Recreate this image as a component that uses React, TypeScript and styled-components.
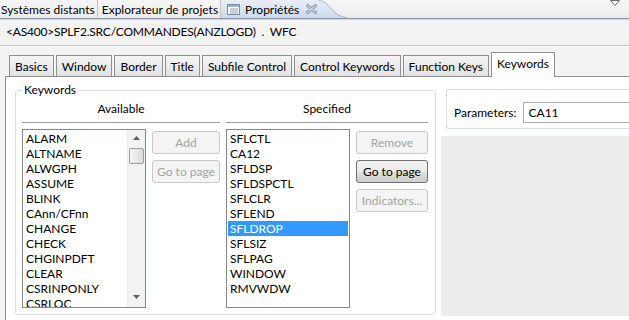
import React from "react";
import styled, { createGlobalStyle } from "styled-components";

const FONT = `Lato, "Noto Sans", "Liberation Sans", sans-serif`;

const GlobalStyle = createGlobalStyle`
  html, body { margin: 0; padding: 0; }
  body {
    font-family: ${FONT};
    font-size: 12px;
    color: #000;
    background: #f3f3f3;
  }
`;

const Screen = styled.div`
  width: 629px;
  height: 320px;
  overflow: hidden;
  display: flex;
  flex-direction: column;
  background: #f3f3f3;
`;

/* ---- view tabs (Eclipse part stack) ---- */

const ViewBar = styled.div`
  flex-shrink: 0;
  height: 18px;
  display: flex;
  align-items: stretch;
  background: linear-gradient(#f6f6f6, #ececec);
  border-bottom: 1px solid #8d97a5;
  box-shadow: 0 1px 0 #c6d5ea;
  margin-bottom: 1px;
`;

const ViewTab = styled.div`
  display: flex;
  align-items: center;
  padding: 0 2px 0 4px;
  border-right: 1px solid #c4c4c4;
  white-space: nowrap;

  &:first-child {
    padding-left: 1px;
  }
`;

const ActiveViewTab = styled.div`
  display: flex;
  align-items: center;
  padding: 0 2px 0 6px;
  background: linear-gradient(#e9eff8, #ccdaed);
  white-space: nowrap;
`;

const TabLabel = styled.span`
  margin: 0 7px 0 5px;
`;

const TabCurve = styled.svg`
  display: block;
  flex-shrink: 0;
`;

const ViewMenu = styled.svg`
  margin: 0 9px 0 auto;
  align-self: flex-start;
`;

/* ---- title ---- */

const TitleBar = styled.div`
  flex-shrink: 0;
  height: 26px;
  box-sizing: border-box;
  padding: 4px 0 0 6px;
  line-height: 16px;
  letter-spacing: -0.2px;
  white-space: pre;
  border-bottom: 1px solid #c0c0c0;
  box-shadow: 0 1px 0 #ffffff;
`;

/* ---- tab folder ---- */

const Folder = styled.div`
  flex: 1;
  display: flex;
  flex-direction: column;
  margin-top: 6px;
`;

const TabRow = styled.div`
  height: 24px;
  display: flex;
  align-items: flex-end;
  gap: 2px;
  padding-left: 9px;
`;

const Tab = styled.div<{ $selected?: boolean }>`
  position: relative;
  z-index: ${(p) => (p.$selected ? 1 : 0)};
  height: ${(p) => (p.$selected ? 25 : 21)}px;
  margin-bottom: ${(p) => (p.$selected ? -1 : 0)}px;
  box-sizing: border-box;
  display: flex;
  align-items: center;
  padding: 0 5px ${(p) => (p.$selected ? 3 : 0)}px;
  border: 1px solid #8e8f8f;
  border-bottom: none;
  background: ${(p) =>
    p.$selected ? "#ffffff" : "linear-gradient(#f4f4f4, #e2e2e2)"};
  white-space: nowrap;
`;

const Pane = styled.div`
  flex: 1;
  margin-left: 5px;
  border-top: 1px solid #8e8f8f;
  border-left: 1px solid #8e8f8f;
  background: #ffffff;
  display: flex;
  gap: 5px;
  padding: 6px 0 0 9px;
`;

/* ---- keywords group ---- */

const Group = styled.fieldset`
  margin: 0;
  width: 421px;
  height: 232px;
  box-sizing: border-box;
  border: 1px solid #d5dfe5;
  border-radius: 3px;
  padding: 0 7px 0 6px;
  display: flex;
  gap: 6px;
  min-width: 0;
`;

const Legend = styled.legend`
  padding: 0 2px;
  line-height: 14px;
`;

const Column = styled.div<{ $width: number }>`
  width: ${(p) => p.$width}px;
  display: flex;
  flex-direction: column;
`;

const ColumnHead = styled.div`
  padding: 4px 0 5px;
  line-height: 16px;
  text-align: center;
  border-bottom: 1px solid #a0a0a0;
  box-shadow: 0 1px 0 #ffffff;
`;

const ColumnBody = styled.div`
  display: flex;
  gap: 6px;
  margin-top: 6px;
`;

const ListBox = styled.div`
  width: 124px;
  height: 179px;
  flex-shrink: 0;
  box-sizing: border-box;
  border: 1px solid #828790;
  background: #ffffff;
  display: flex;
  overflow: hidden;
`;

const Items = styled.div`
  flex: 1;
  padding: 1px 1px 0;
  overflow: hidden;
`;

const Item = styled.div<{ $selected?: boolean }>`
  height: 15px;
  line-height: 15px;
  padding-left: 2px;
  white-space: nowrap;
  background: ${(p) => (p.$selected ? "#3399ff" : "transparent")};
  color: ${(p) => (p.$selected ? "#ffffff" : "#000000")};
`;

const ScrollTrack = styled.div`
  width: 17px;
  flex-shrink: 0;
  display: flex;
  flex-direction: column;
  background: #f3f3f3;
  border-left: 1px solid #ebebeb;
`;

const ScrollArrow = styled.div<{ $down?: boolean }>`
  height: 17px;
  display: flex;
  align-items: center;
  justify-content: center;
  margin-top: ${(p) => (p.$down ? "auto" : "0")};
  padding-bottom: ${(p) => (p.$down ? 4 : 1)}px;
  box-sizing: border-box;
`;

const Thumb = styled.div`
  height: 16px;
  margin: 1px 1px 0;
  box-sizing: border-box;
  border: 1px solid #9b9b9b;
  border-radius: 2px;
  background: linear-gradient(90deg, #f6f6f6, #dadada);
`;

const Buttons = styled.div`
  flex: 1;
  display: flex;
  flex-direction: column;
  gap: 6px;
  padding-top: 2px;
`;

const Button = styled.button`
  height: 23px;
  box-sizing: border-box;
  padding: 0;
  font-family: ${FONT};
  font-size: 12px;
  white-space: nowrap;
  border: 1px solid #707070;
  border-radius: 3px;
  color: #000000;
  background: linear-gradient(#f2f2f2 0%, #ebebeb 50%, #dddddd 51%, #cfcfcf 100%);

  &:disabled {
    border-color: #c9c9c9;
    color: #a3a3a3;
    background: #f4f4f4;
  }
`;

/* ---- right side ---- */

const Side = styled.div`
  flex: 1;
  display: flex;
  flex-direction: column;
  min-width: 0;
`;

const ParamBox = styled.div`
  margin: 6px 0 0 5px;
  height: 40px;
  box-sizing: border-box;
  border: 1px solid #d5dfe5;
  border-right: none;
  border-radius: 3px 0 0 3px;
  display: flex;
  align-items: center;
  gap: 6px;
  padding: 6px 0 0 7px;
`;

const Input = styled.div`
  flex: 1;
  height: 21px;
  box-sizing: border-box;
  border: 1px solid #abadb3;
  border-right: none;
  padding-left: 5px;
  line-height: 19px;
  background: #ffffff;
`;

const Blank = styled.div`
  margin-top: 7px;
  height: 180px;
  background: #ededed;
`;

const available = [
  "ALARM",
  "ALTNAME",
  "ALWGPH",
  "ASSUME",
  "BLINK",
  "CAnn/CFnn",
  "CHANGE",
  "CHECK",
  "CHGINPDFT",
  "CLEAR",
  "CSRINPONLY",
  "CSRLOC",
];

const specified = [
  "SFLCTL",
  "CA12",
  "SFLDSP",
  "SFLDSPCTL",
  "SFLCLR",
  "SFLEND",
  "SFLDROP",
  "SFLSIZ",
  "SFLPAG",
  "WINDOW",
  "RMVWDW",
];

const tabs = [
  "Basics",
  "Window",
  "Border",
  "Title",
  "Subfile Control",
  "Control Keywords",
  "Function Keys",
  "Keywords",
];

const PropertiesIcon = () => (
  <svg width="13" height="11" viewBox="0 0 13 11">
    <rect x="0.5" y="0.5" width="12" height="10" fill="#ffffff" stroke="#7b8aa3" />
    <rect x="1" y="1" width="11" height="2" fill="#9fb0cb" />
    <path d="M3 5h8M3 7h8M3 9h8" stroke="#8d9cb5" strokeWidth="1" />
  </svg>
);

const CloseIcon = () => (
  <svg width="11" height="10" viewBox="0 0 11 10">
    <path d="M1.5 1.5l8 7M9.5 1.5l-8 7" stroke="#8e9aab" strokeWidth="3" strokeLinecap="round" />
    <path d="M1.5 1.5l8 7M9.5 1.5l-8 7" stroke="#eef1f5" strokeWidth="1" strokeLinecap="round" />
  </svg>
);

const Arrow = ({ down }: { down?: boolean }) => (
  <svg width="7" height="4" viewBox="0 0 7 4">
    <polygon points={down ? "0,0 7,0 3.5,4" : "0,4 7,4 3.5,0"} fill="#5f5f5f" />
  </svg>
);

export default function App() {
  return (
    <Screen>
      <GlobalStyle />
      <ViewBar>
        <ViewTab>Systèmes distants</ViewTab>
        <ViewTab>Explorateur de projets</ViewTab>
        <ActiveViewTab>
          <PropertiesIcon />
          <TabLabel>Propriétés</TabLabel>
          <CloseIcon />
        </ActiveViewTab>
        <TabCurve width="28" height="18" viewBox="0 0 28 18">
          <defs>
            <linearGradient id="tabfill" x1="0" y1="0" x2="0" y2="1">
              <stop offset="0" stopColor="#e9eff8" />
              <stop offset="1" stopColor="#ccdaed" />
            </linearGradient>
          </defs>
          <path d="M0 0 C10 0 14 18 28 18 L0 18 Z" fill="url(#tabfill)" />
          <path d="M0 0.5 C10 0.5 14 17.5 28 17.5" fill="none" stroke="#a3b2c6" />
        </TabCurve>
        <ViewMenu width="10" height="6" viewBox="0 0 10 6">
          <polygon points="0.5,0.5 9.5,0.5 5,5.5" fill="#ffffff" stroke="#6d6d6d" />
        </ViewMenu>
      </ViewBar>

      <TitleBar>{"<AS400>SPLF2.SRC/COMMANDES(ANZLOGD)  .  WFC"}</TitleBar>

      <Folder>
        <TabRow>
          {tabs.map((t) => (
            <Tab key={t} $selected={t === "Keywords"}>
              {t}
            </Tab>
          ))}
        </TabRow>
        <Pane>
          <Group>
            <Legend>Keywords</Legend>
            <Column $width={198}>
              <ColumnHead>Available</ColumnHead>
              <ColumnBody>
                <ListBox>
                  <Items>
                    {available.map((k) => (
                      <Item key={k}>{k}</Item>
                    ))}
                  </Items>
                  <ScrollTrack>
                    <ScrollArrow>
                      <Arrow />
                    </ScrollArrow>
                    <Thumb />
                    <ScrollArrow $down>
                      <Arrow down />
                    </ScrollArrow>
                  </ScrollTrack>
                </ListBox>
                <Buttons>
                  <Button disabled>Add</Button>
                  <Button disabled>Go to page</Button>
                </Buttons>
              </ColumnBody>
            </Column>
            <Column $width={202}>
              <ColumnHead>Specified</ColumnHead>
              <ColumnBody>
                <ListBox>
                  <Items>
                    {specified.map((k) => (
                      <Item key={k} $selected={k === "SFLDROP"}>
                        {k}
                      </Item>
                    ))}
                  </Items>
                </ListBox>
                <Buttons>
                  <Button disabled>Remove</Button>
                  <Button>Go to page</Button>
                  <Button disabled>Indicators...</Button>
                </Buttons>
              </ColumnBody>
            </Column>
          </Group>
          <Side>
            <ParamBox>
              <span>Parameters:</span>
              <Input>CA11</Input>
            </ParamBox>
            <Blank />
          </Side>
        </Pane>
      </Folder>
    </Screen>
  );
}
